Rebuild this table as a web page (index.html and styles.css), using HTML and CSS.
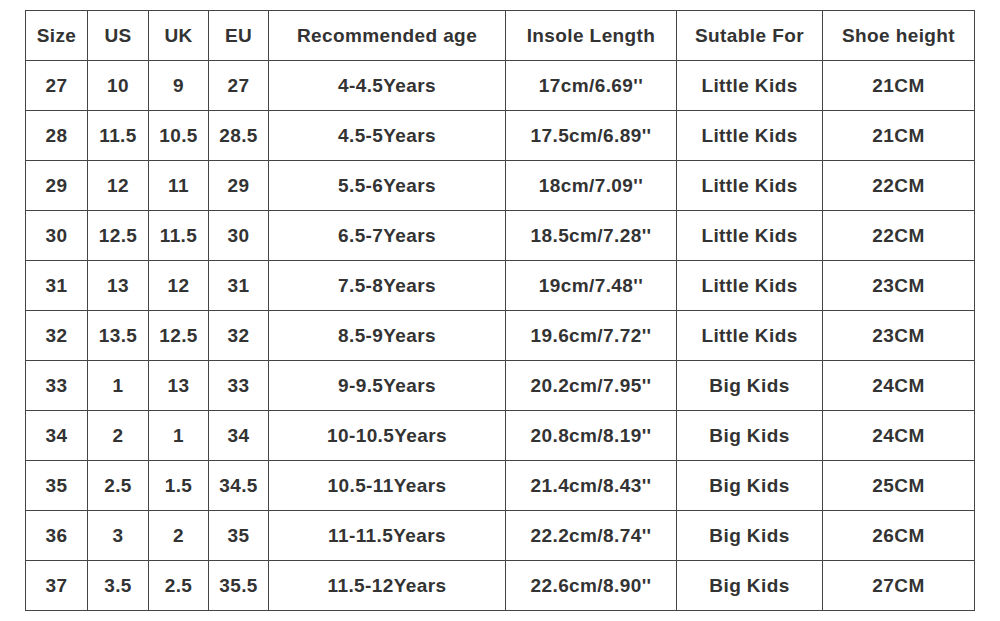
FILE: index.html
```html
<!DOCTYPE html>
<html>
<head>
<meta charset="utf-8">
<link rel="stylesheet" href="styles.css">
</head>
<body>
<table class="size-table">
  <colgroup>
    <col class="c-size"><col class="c-us"><col class="c-uk"><col class="c-eu">
    <col class="c-age"><col class="c-insole"><col class="c-for"><col class="c-height">
  </colgroup>
  <thead>
    <tr><th>Size</th><th>US</th><th>UK</th><th>EU</th><th>Recommended age</th><th>Insole Length</th><th>Sutable For</th><th>Shoe height</th></tr>
  </thead>
  <tbody>
    <tr><td>27</td><td>10</td><td>9</td><td>27</td><td>4-4.5Years</td><td>17cm/6.69''</td><td>Little Kids</td><td>21CM</td></tr>
    <tr><td>28</td><td>11.5</td><td>10.5</td><td>28.5</td><td>4.5-5Years</td><td>17.5cm/6.89''</td><td>Little Kids</td><td>21CM</td></tr>
    <tr><td>29</td><td>12</td><td>11</td><td>29</td><td>5.5-6Years</td><td>18cm/7.09''</td><td>Little Kids</td><td>22CM</td></tr>
    <tr><td>30</td><td>12.5</td><td>11.5</td><td>30</td><td>6.5-7Years</td><td>18.5cm/7.28''</td><td>Little Kids</td><td>22CM</td></tr>
    <tr><td>31</td><td>13</td><td>12</td><td>31</td><td>7.5-8Years</td><td>19cm/7.48''</td><td>Little Kids</td><td>23CM</td></tr>
    <tr><td>32</td><td>13.5</td><td>12.5</td><td>32</td><td>8.5-9Years</td><td>19.6cm/7.72''</td><td>Little Kids</td><td>23CM</td></tr>
    <tr><td>33</td><td>1</td><td>13</td><td>33</td><td>9-9.5Years</td><td>20.2cm/7.95''</td><td>Big Kids</td><td>24CM</td></tr>
    <tr><td>34</td><td>2</td><td>1</td><td>34</td><td>10-10.5Years</td><td>20.8cm/8.19''</td><td>Big Kids</td><td>24CM</td></tr>
    <tr><td>35</td><td>2.5</td><td>1.5</td><td>34.5</td><td>10.5-11Years</td><td>21.4cm/8.43''</td><td>Big Kids</td><td>25CM</td></tr>
    <tr><td>36</td><td>3</td><td>2</td><td>35</td><td>11-11.5Years</td><td>22.2cm/8.74''</td><td>Big Kids</td><td>26CM</td></tr>
    <tr><td>37</td><td>3.5</td><td>2.5</td><td>35.5</td><td>11.5-12Years</td><td>22.6cm/8.90''</td><td>Big Kids</td><td>27CM</td></tr>
  </tbody>
</table>
</body>
</html>
```
FILE: styles.css
```css
html, body {
  margin: 0;
  padding: 0;
  background: #ffffff;
}
body {
  padding: 10px 0 0 25px;
  font-family: "Liberation Sans", Arial, sans-serif;
}
.size-table {
  border-collapse: collapse;
  table-layout: fixed;
  width: 949px;
  color: #333333;
  font-size: 19px;
  font-weight: bold;
  letter-spacing: 0.4px;
}
.size-table th,
.size-table td {
  border: 1.5px solid #454545;
  height: 50px;
  padding: 0;
  text-align: center;
  vertical-align: middle;
  box-sizing: border-box;
  font-weight: bold;
  white-space: nowrap;
}
.c-size { width: 62px; }
.c-us { width: 61px; }
.c-uk { width: 60px; }
.c-eu { width: 60px; }
.c-age { width: 237px; }
.c-insole { width: 171px; }
.c-for { width: 146px; }
.c-height { width: 152px; }
```
